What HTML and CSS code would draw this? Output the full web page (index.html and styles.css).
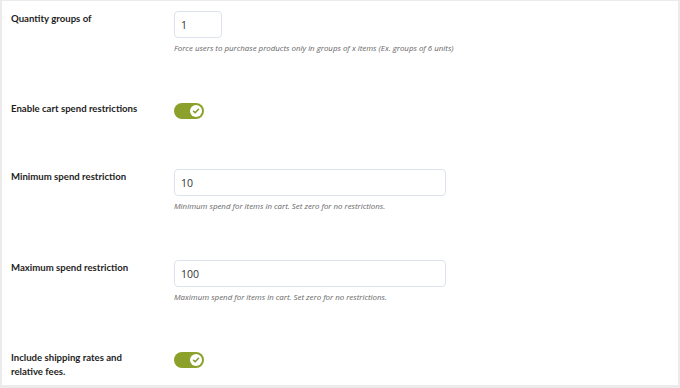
FILE: index.html
```html
<!DOCTYPE HTML>
<html>

<head>
    <title>Cart restrictions</title>
    <meta name="viewport" content="width=device-width, initial-scale=1">
    <link rel="stylesheet" href="styles.css">
</head>

<body>
    <div class="panel">
        <div class="row">
            <label class="label" for="qty">Quantity groups of</label>
            <div class="field">
                <input type="text" id="qty" class="input small" value="1" />
                <p class="help">Force users to purchase products only in groups of x items (Ex. groups of 6 units)</p>
            </div>
        </div>

        <div class="row">
            <span class="label toggle-label">Enable cart spend restrictions</span>
            <div class="field toggle-field">
                <span class="toggle">
                    <span class="knob">
                        <svg width="8" height="8" viewBox="0 0 8 8"><path d="M1.5 4.2 L3.2 5.8 L6.5 2.3" fill="none" stroke="#7d9424" stroke-width="1.4" stroke-linecap="round" stroke-linejoin="round"/></svg>
                    </span>
                </span>
            </div>
        </div>

        <div class="row">
            <label class="label" for="min">Minimum spend restriction</label>
            <div class="field">
                <input type="text" id="min" class="input wide" value="10" />
                <p class="help">Minimum spend for items in cart. Set zero for no restrictions.</p>
            </div>
        </div>

        <div class="row">
            <label class="label" for="max">Maximum spend restriction</label>
            <div class="field">
                <input type="text" id="max" class="input wide" value="100" />
                <p class="help">Maximum spend for items in cart. Set zero for no restrictions.</p>
            </div>
        </div>

        <div class="row">
            <span class="label toggle-label">Include shipping rates and<br>relative fees.</span>
            <div class="field toggle-field">
                <span class="toggle">
                    <span class="knob">
                        <svg width="8" height="8" viewBox="0 0 8 8"><path d="M1.5 4.2 L3.2 5.8 L6.5 2.3" fill="none" stroke="#7d9424" stroke-width="1.4" stroke-linecap="round" stroke-linejoin="round"/></svg>
                    </span>
                </span>
            </div>
        </div>
    </div>
</body>

</html>
```

FILE: styles.css
```css
html, body {
    margin: 0;
    padding: 0;
    background: #ffffff;
}

body {
    font-family: "Open Sans", "Noto Sans", Arial, sans-serif;
}

.panel {
    box-sizing: border-box;
    width: 680px;
    height: 388px;
    border: 2px solid #ebebeb;
    border-top-width: 1px;
    border-bottom-width: 3px;
    padding: 10px 0 0 9px;
    overflow: hidden;
}

.row {
    display: flex;
    align-items: flex-start;
    margin-bottom: 48px;
}

.label {
    width: 163px;
    flex-shrink: 0;
    font-family: Lato, "Open Sans", Arial, sans-serif;
    font-size: 9.6px;
    font-weight: 700;
    color: #1e1e1e;
    line-height: 14px;
    padding-top: 1px;
}

.toggle-label {
    padding-top: 0;
    margin-top: 0;
}

.field {
    display: flex;
    flex-direction: column;
}

.toggle-field {
    height: 19px;
}

.input {
    box-sizing: border-box;
    height: 27px;
    border: 1px solid #dde2ec;
    border-radius: 4px;
    padding: 0 6px;
    font-family: "Open Sans", Arial, sans-serif;
    font-size: 10.5px;
    color: #333333;
    background: #ffffff;
    outline: none;
}

.input.small {
    width: 48px;
}

.input.wide {
    width: 272px;
}

.help {
    margin: 4px 0 0 0;
    font-size: 7.9px;
    font-style: italic;
    color: #666666;
    line-height: 12px;
}

.toggle {
    display: inline-flex;
    align-items: center;
    justify-content: flex-end;
    box-sizing: border-box;
    width: 30px;
    height: 16px;
    margin-top: 1px;
    padding-right: 2px;
    border-radius: 8px;
    background: #8ba12c;
}

.knob {
    display: inline-flex;
    align-items: center;
    justify-content: center;
    width: 12px;
    height: 12px;
    border-radius: 50%;
    background: #ffffff;
}
```
